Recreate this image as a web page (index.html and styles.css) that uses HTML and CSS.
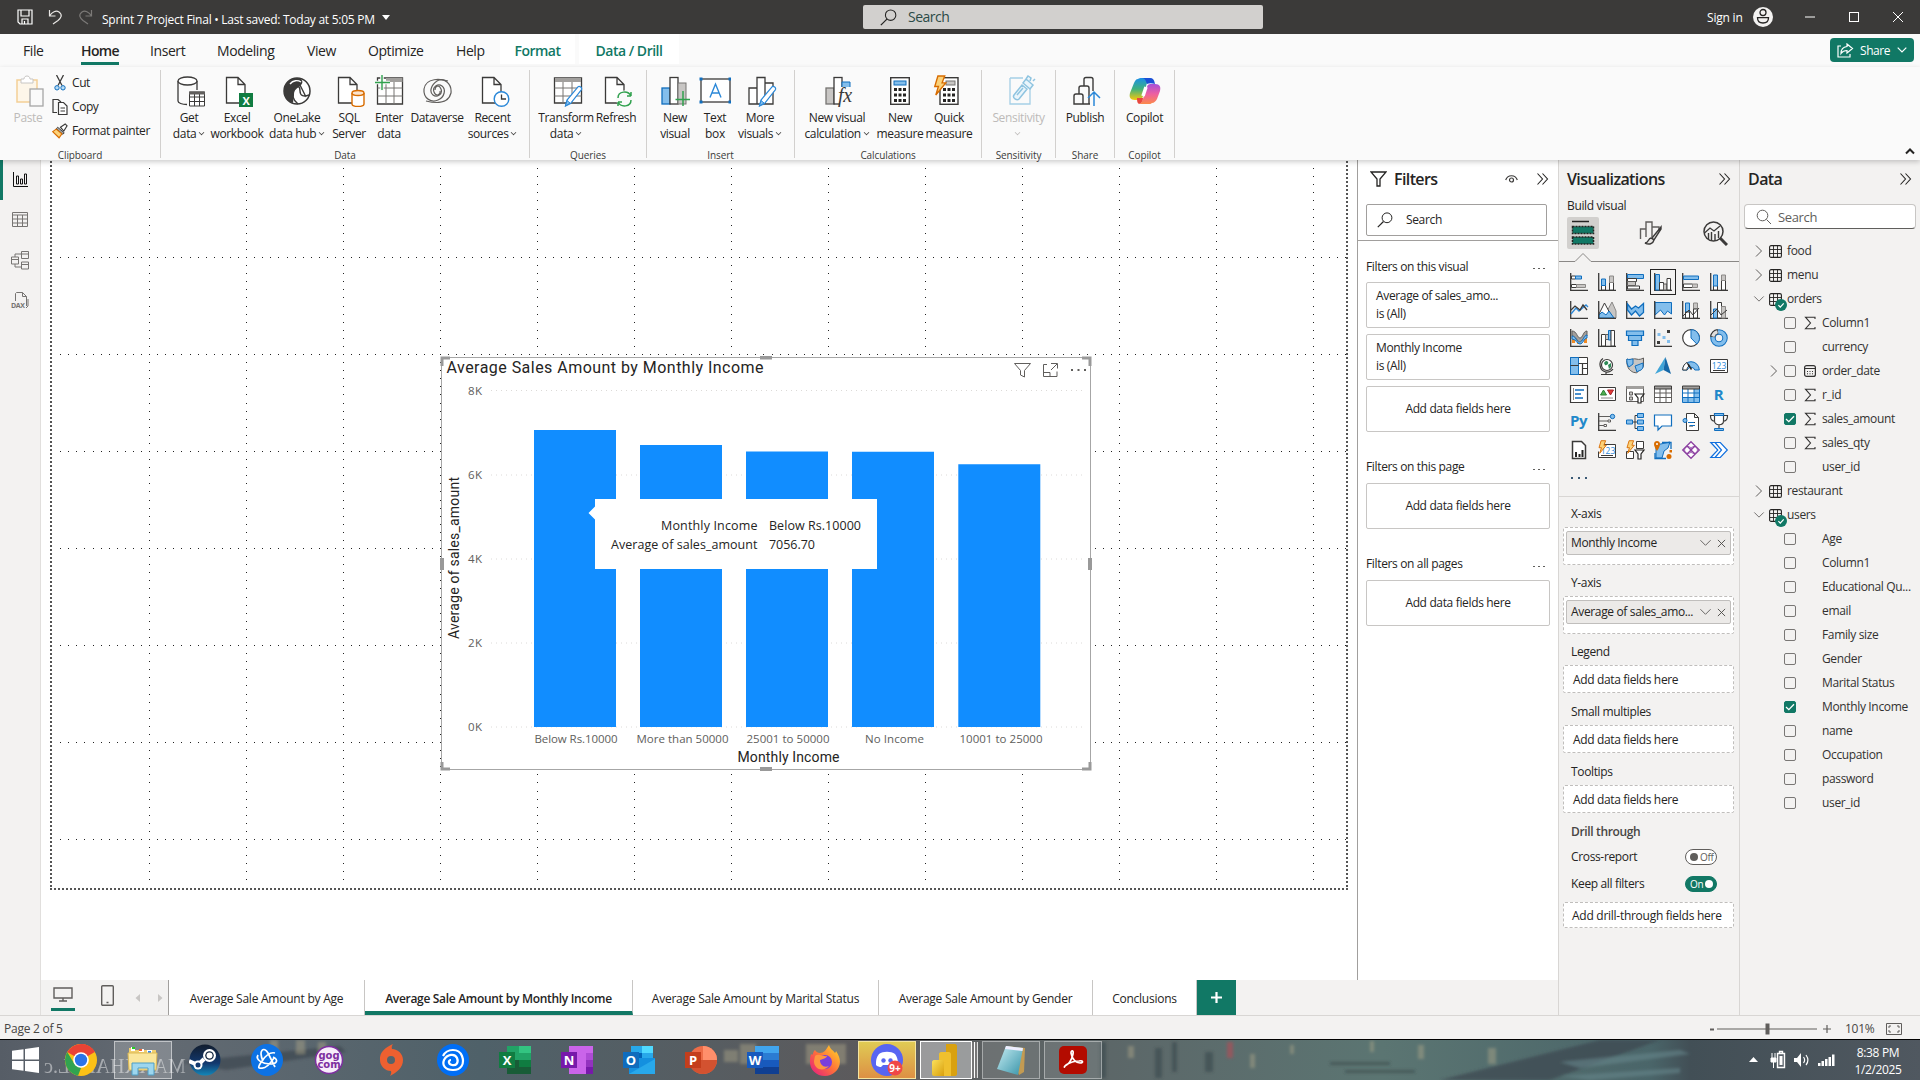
FILE: index.html
```html
<!DOCTYPE html>
<html lang="en">
<head>
<meta charset="utf-8">
<title>Sprint 7 Project Final</title>
<link rel="stylesheet" href="styles.css">
</head>
<body>
<svg class="defs" width="0" height="0" aria-hidden="true">
  <defs>
    <linearGradient id="copA" x1="0" y1="0" x2="0" y2="1"><stop offset="0" stop-color="#1a8fe8"/><stop offset=".5" stop-color="#3fb27c"/><stop offset="1" stop-color="#f7c80c"/></linearGradient>
    <linearGradient id="copB" x1="0" y1="0" x2="0" y2="1"><stop offset="0" stop-color="#a64fd8"/><stop offset=".5" stop-color="#ee5fa0"/><stop offset="1" stop-color="#fc8a4a"/></linearGradient>
    <linearGradient id="steam" x1="0" y1="0" x2="0" y2="1"><stop offset="0" stop-color="#111d2e"/><stop offset=".6" stop-color="#12386e"/><stop offset="1" stop-color="#1387b8"/></linearGradient>
    <linearGradient id="fox" x1="1" y1="0" x2="0" y2="1"><stop offset="0" stop-color="#ffe226"/><stop offset=".5" stop-color="#ff7139"/><stop offset="1" stop-color="#e31587"/></linearGradient>
    <linearGradient id="pbi" x1="0" y1="0" x2="1" y2="1"><stop offset="0" stop-color="#fbe05a"/><stop offset="1" stop-color="#d99f0c"/></linearGradient>
    <linearGradient id="note" x1="0" y1="0" x2="1" y2="1"><stop offset="0" stop-color="#c8eef4"/><stop offset="1" stop-color="#3793a8"/></linearGradient>
    <symbol id="page" viewBox="0 0 28 32"><path d="M1.500 2.500h11.500l7 7v18.500H1.500zM13 2.500v7h7" fill="#fff" stroke="#3b3a39" stroke-width="1.300"/></symbol>
    <symbol id="dchev" viewBox="0 0 12 14"><path d="M1 1.500l5 5.500-5 5.500M6 1.500l5 5.500-5 5.500" fill="none" stroke="#252423" stroke-width="1.100"/></symbol>
    <symbol id="mag" viewBox="0 0 16 16"><circle cx="10" cy="5.800" r="4.900" fill="none" stroke="#252423"/><path d="M6.500 9.500L.8 15.200" stroke="#252423" stroke-width="1.200"/></symbol>
    <symbol id="right" viewBox="0 0 8 14"><path d="M1 1.500L6.500 7 1 12.500" fill="none" stroke="#605e5c"/></symbol>
    <symbol id="open" viewBox="0 0 14 8"><path d="M1.500 1L7 6.500 12.500 1" fill="none" stroke="#605e5c"/></symbol>
    <symbol id="x" viewBox="0 0 10 10"><path d="M1 1l8 8M9 1L1 9" stroke="#4a4846" fill="none"/></symbol>
    <symbol id="tbl" viewBox="0 0 13 13"><rect x=".6" y=".6" width="11.800" height="11.800" rx="1.500" fill="none" stroke="#252423" stroke-width="1.100"/><path d="M.5 4.500h12M.5 8.500h12M4.500.5v12M8.500.5v12" stroke="#252423" stroke-width=".9"/></symbol>
    <symbol id="ok" viewBox="0 0 12 12"><circle cx="6" cy="6" r="6" fill="#117865"/><path d="M3.400 6.200l1.900 1.900 3.400-3.800" fill="none" stroke="#fff" stroke-width="1.200"/></symbol>
    <symbol id="sum" viewBox="0 0 12 14"><path d="M11 3V1.200H1.500L6.500 7l-5 5.700H11V11" fill="none" stroke="#323130" stroke-width="1.100"/></symbol>
    <symbol id="bolt" viewBox="0 0 12 20"><path d="M4 1h6.500L8 7.500h3.500L2 19l2.500-8H1z" fill="#fbd27a" stroke="#d86c00" stroke-width="1.300"/></symbol>
    <symbol id="axes" viewBox="0 0 18 18"><path d="M.7 0v17.300H18" fill="none" stroke="#3b3a39" stroke-width="1.300"/></symbol>
    <symbol id="pencil" viewBox="0 0 18 22"><path d="M1 21l1.500-6L13.500 1.800c1.500-1.300 4.500 1 3.300 3L6 18.500z" fill="#fff" stroke="#2b88d8" stroke-width="1.200"/><path d="M1 21l1.500-5.500 3 2.500z" fill="#83beec" stroke="#2b88d8"/></symbol>
  </defs>
</svg>

<div class="app">
  <header class="titlebar">
    <div class="quick">
      <svg width="16" height="16" viewBox="0 0 16 16"><path d="M1 1h14v14H3l-2-2zM4 1v6h8V1M5 15v-5h6v5M7.500 12v3" fill="none" stroke="#fff" stroke-width="1.200"/></svg>
      <svg width="15" height="16" viewBox="0 0 15 16"><path d="M1.500 1v6h6M1.500 7C4 3 8 1 11 3c4 3 2 6-1 8.500L5 15" fill="none" stroke="#e8e6e4" stroke-width="1.200"/></svg>
      <svg width="15" height="16" viewBox="0 0 15 16"><path d="M13.500 1v6h-6M13.500 7C11 3 7 1 4 3c-4 3-2 6 1 8.500L10 15" fill="none" stroke="#7b7977" stroke-width="1.200"/></svg>
    </div>
    <div class="doc">Sprint 7 Project Final • Last saved: Today at 5:05 PM</div>
    <span class="caret"></span>
    <div class="topsearch"><svg width="17" height="17"><use href="#mag"/></svg><span>Search</span></div>
    <div class="account">
      <span>Sign in</span>
      <svg width="20" height="20" viewBox="0 0 20 20"><circle cx="10" cy="10" r="10" fill="#f3f2f1"/><circle cx="10" cy="5.500" r="3" fill="none" stroke="#252423" stroke-width="1.300"/><path d="M4.500 10.700h11c0 3.500-2 5.300-5.500 5.300s-5.500-1.800-5.500-5.300z" fill="none" stroke="#252423" stroke-width="1.300"/></svg>
      <svg class="win" width="10" height="10"><path d="M0 5h10" stroke="#fff"/></svg>
      <svg class="win" width="10" height="10"><rect x=".5" y=".5" width="9" height="9" fill="none" stroke="#fff"/></svg>
      <svg class="win" width="10" height="10"><path d="M0 0l10 10M10 0L0 10" stroke="#fff"/></svg>
    </div>
  </header>

  <nav class="tabs">
    <span class="tab t-file">File</span><span class="tab t-home active">Home</span><span class="tab t-insert">Insert</span><span class="tab t-model">Modeling</span><span class="tab t-view">View</span><span class="tab t-opt">Optimize</span><span class="tab t-help">Help</span>
    <span class="ctx c-format">Format</span><span class="ctx c-drill">Data / Drill</span>
    <span class="share"><svg width="17" height="15" viewBox="0 0 17 15"><path d="M4 3H1v11h12v-3" fill="none" stroke="#fff" stroke-width="1.200"/><path d="M10 1l5.500 4.500L10 10V7.500c-3 0-4.500.8-6 3C4 6.500 6 4 10 3.500z" fill="none" stroke="#fff" stroke-width="1.200"/></svg><span>Share</span><svg width="10" height="6" viewBox="0 0 10 6"><path d="M.7.700L5 5l4.300-4.300" fill="none" stroke="#fff" stroke-width="1.200"/></svg></span>
  </nav>

  <section class="ribbon">
    <div class="group g-clip">
      <div class="tools">
        <div class="btn off w56 nudge"><svg width="28" height="32" viewBox="0 0 28 32"><path d="M3 5h18v22H1V5z" fill="#fdf6e9" stroke="#f3cf96" stroke-width="1.500"/><path d="M5 8V4h3c0-4 6-4 6 0h3v4z" fill="#fff" stroke="#c8c6c4"/><rect x="14" y="14" width="13" height="17" fill="#fafafa" stroke="#a6a6a6" stroke-width="1.300"/></svg><b>Paste</b></div>
        <div class="clip">
          <span><svg width="12" height="16" viewBox="0 0 12 16"><path d="M2.500 0L8 10.500M9.500 0L4 10.500" stroke="#3b3a39" stroke-width="1.300"/><circle cx="3" cy="12.800" r="2.200" fill="#b7dcf6" stroke="#106ebe"/><circle cx="9" cy="12.800" r="2.200" fill="#b7dcf6" stroke="#106ebe"/></svg>Cut</span>
          <span><svg width="16" height="16" viewBox="0 0 16 16"><path d="M5 13.500H1v-13h5l3 2.500" fill="none" stroke="#3b3a39" stroke-width="1.200"/><path d="M6.500 3.500h5l3.500 3.500v8.500H6.500zM8.500 9h4.500M8.500 12h4.500" fill="#fff" stroke="#3b3a39" stroke-width="1.200"/></svg>Copy</span>
          <span><svg width="17" height="16" viewBox="0 0 17 16"><path d="M9 4l5-3.500L16 2.500 12.500 8z" fill="#fff" stroke="#3b3a39" stroke-width="1.200"/><path d="M6 4l7 6-1.500 1.500-7-6z" fill="#a6a6a6" stroke="#3b3a39"/><path d="M4.500 6l6 5-3 4.200L.7 8.700z" fill="#fbd27a" stroke="#d86c00" stroke-width="1.200"/></svg>Format painter</span>
        </div>
      </div>
      <div class="gname">Clipboard</div>
    </div>
    <div class="group g-data">
      <div class="tools">
        <div class="btn w48 shift nudge"><svg width="30" height="32" viewBox="0 0 30 32"><path d="M2 6v20c0 2 4 3.500 9 3.500M21 6v9" fill="none" stroke="#3b3a39" stroke-width="1.300"/><ellipse cx="11.500" cy="6" rx="9.500" ry="4" fill="#fff" stroke="#3b3a39" stroke-width="1.300"/><path d="M13.500 17h15v14h-15zM13.500 22h15M13.500 26.500h15M18.500 19v12M23.500 19v12" fill="#fff" stroke="#3b3a39"/><path d="M13 16.500h16v3H13z" fill="#605e5c"/></svg><b>Get<br>data <i></i></b></div>
        <div class="btn w48 nudge"><svg width="28" height="32" viewBox="0 0 28 32"><use href="#page" width="28" height="32"/><rect x="14" y="18" width="14" height="14" fill="#107c41"/><text x="21" y="29.500" class="xl">X</text></svg><b>Excel<br>workbook</b></div>
        <div class="btn w72"><svg width="30" height="32" viewBox="0 0 30 32"><circle cx="15" cy="16" r="13" fill="#fff" stroke="#3b3a39" stroke-width="1.500"/><path d="M15 3c6 0 7 5 3 8-3 3-6 3-6 9l-1 8C5 26 2 22 2 16c0-4 2-8 5-10s5-3 8-3z" fill="#3b3a39"/><path d="M12 12c4-3 6 0 6 4 0 5 4 6 9 4M12 14c-2 6-2 10 4 15M18 10l6 12" stroke="#3b3a39" fill="none" stroke-width="1.400"/><path d="M8 9c3-4 8-4 11-2" stroke="#fff" fill="none" stroke-width="1.300"/></svg><b>OneLake<br>data hub <i></i></b></div>
        <div class="btn w32 nudge"><svg width="30" height="32" viewBox="0 0 30 32"><use href="#page" x="1" width="28" height="32"/><path d="M16 18v11c0 3.300 12 3.300 12 0V18" fill="#fff" stroke="#d86c00" stroke-width="1.400"/><ellipse cx="22" cy="18" rx="6" ry="2.500" fill="#fce4cd" stroke="#d86c00" stroke-width="1.400"/></svg><b>SQL<br>Server</b></div>
        <div class="btn w48"><svg width="30" height="32" viewBox="0 0 30 32"><path d="M3.500 3h25v26h-25z" fill="#fff" stroke="#3b3a39" stroke-width="1.300"/><path d="M12 3h16.500v4H12z" fill="#a19f9d"/><path d="M3.500 13h25M3.500 21h25M12 7v22M20 7v22" stroke="#767472"/><path d="M8 0v16M0 7.500h16" stroke="#fafafa" stroke-width="3.500"/><path d="M8 0v15M1 7.500h15" stroke="#30a14e" stroke-width="1.400"/></svg><b>Enter<br>data</b></div>
        <div class="btn w48"><svg width="30" height="32" viewBox="0 0 30 32"><g fill="none" stroke="#605e5c" stroke-width="1.200"><path d="M26 6C19 4 4 2 2 14c-1 10 8 14 14 11 7-3 8-11 4-14s-10 1-8 6 7 3 6-1"/><path d="M4 26c8 2 22 4 25-8C30 8 21 2 15 6S7 17 11 20s10-1 8-6-6-3-6 1"/></g></svg><b>Dataverse</b></div>
        <div class="btn w63 nudge"><svg width="30" height="32" viewBox="0 0 30 32"><use href="#page" x="1" width="28" height="32"/><circle cx="21.500" cy="24" r="7.300" fill="#fff" stroke="#2b88d8" stroke-width="1.400"/><path d="M21.500 19.500V24H26" fill="none" stroke="#3b3a39" stroke-width="1.300"/></svg><b>Recent<br>sources <i></i></b></div>
      </div>
      <div class="gname">Data</div>
    </div>
    <div class="group g-query">
      <div class="tools">
        <div class="btn w58 qfirst nudge"><svg width="32" height="32" viewBox="0 0 32 32"><path d="M2.500 3h27v25h-27z" fill="#fff" stroke="#3b3a39" stroke-width="1.300"/><path d="M3 3h26v4H3z" fill="#a19f9d"/><path d="M2.500 13h27M2.500 21h27M11 7v21M20 7v21" stroke="#767472"/><use href="#pencil" x="12" y="10" width="19" height="22"/></svg><b>Transform<br>data <i></i></b></div>
        <div class="btn w42 nudge"><svg width="30" height="32" viewBox="0 0 30 32"><use href="#page" x="1" width="28" height="32"/><circle cx="21.500" cy="24" r="8.500" fill="#fafafa"/><path d="M15 23c0-7 10-8 13-2v-4m0 4h-4M28 25c0 7-10 8-13 2v4m0-4h4" fill="none" stroke="#30a14e" stroke-width="1.500"/></svg><b>Refresh</b></div>
      </div>
      <div class="gname">Queries</div>
    </div>
    <div class="group g-ins">
      <div class="tools">
        <div class="btn w40 ifirst"><svg width="30" height="32" viewBox="0 0 30 32"><rect x="2" y="13" width="8" height="16" fill="#83beec" stroke="#106ebe" stroke-width="1.300"/><rect x="10" y="2.500" width="8" height="26.500" fill="#fff" stroke="#3b3a39" stroke-width="1.300"/><rect x="18" y="8" width="8" height="21" fill="#c8c6c4" stroke="#767472"/><path d="M23 16v15M15.500 24.500h15" stroke="#30a14e" stroke-width="1.500"/></svg><b>New<br>visual</b></div>
        <div class="btn w40"><svg width="32" height="32" viewBox="0 0 32 32"><rect x="2" y="4" width="29" height="23" fill="#fff" stroke="#3b3a39" stroke-width="1.300"/><path d="M.5 2.500h3v3h-3zM29.500 2.500h3v3h-3zM.5 25.500h3v3h-3zM29.500 25.500h3v3h-3z" fill="#106ebe"/><path d="M11 22.500L16.500 9 22 22.500M13 18h7" fill="none" stroke="#2b88d8" stroke-width="1.400"/></svg><b>Text<br>box</b></div>
        <div class="btn w50 nudge"><svg width="30" height="32" viewBox="0 0 30 32"><path d="M2 13h8v16H2zM10 2.500h8V29h-8zM18 8h8v21h-8z" fill="#fff" stroke="#3b3a39" stroke-width="1.300"/><use href="#pencil" x="11" y="10" width="19" height="22"/></svg><b>More<br>visuals <i></i></b></div>
      </div>
      <div class="gname">Insert</div>
    </div>
    <div class="group g-calc">
      <div class="tools">
        <div class="btn w76 nudge"><svg width="30" height="32" viewBox="0 0 30 32"><rect x="2" y="13" width="8" height="16" fill="#c8c6c4" stroke="#767472" stroke-width="1.300"/><rect x="10" y="2.500" width="8" height="26.500" fill="#fff" stroke="#3b3a39" stroke-width="1.300"/><path d="M18 7h8v6h-8z" fill="#83beec" stroke="#106ebe"/><path d="M16 12h14v20H16z" fill="#fafafa"/><text x="14" y="27" class="fx">fx</text></svg><b>New visual<br>calculation <i></i></b></div>
        <div class="btn w50"><svg width="20" height="32" viewBox="0 0 20 32"><rect x=".7" y="2.700" width="18.600" height="26.600" fill="#fff" stroke="#3b3a39" stroke-width="1.400"/><rect x="4" y="6" width="12" height="4" fill="#83beec" stroke="#106ebe"/><path d="M4 14.500h12M4 20h12M4 25.500h12" stroke="#252423" stroke-width="3" stroke-dasharray="3 1.500"/></svg><b>New<br>measure</b></div>
        <div class="btn w48 back"><svg width="30" height="32" viewBox="0 0 30 32"><rect x="8" y="2.700" width="18" height="26.600" fill="#fff" stroke="#3b3a39" stroke-width="1.400"/><rect x="14" y="6" width="9" height="4" fill="#c8c6c4" stroke="#767472"/><path d="M11 14.500h12M11 20h12M11 25.500h12" stroke="#252423" stroke-width="3" stroke-dasharray="3 1.500"/><use href="#bolt" x="1" y="0" width="14" height="21"/></svg><b>Quick<br>measure</b></div>
      </div>
      <div class="gname">Calculations</div>
    </div>
    <div class="group g-sens"><div class="tools"><div class="btn off w73 nudge"><svg width="30" height="32" viewBox="0 0 30 32"><path d="M4 3h13M24 14v15H4V3" fill="none" stroke="#a5cfe6" stroke-width="1.300"/><path d="M8 20l8-10 5 4-8 10c-2 2-7-1-5-4zM11 20l6-7M17 8l3-4 7 6-3 4zM20 4l2-3 3 2-1 3M27 6l2-2" fill="#eaf5fb" stroke="#8fc4e0" stroke-width="1.500"/></svg><b>Sensitivity<br><i></i></b></div></div><div class="gname">Sensitivity</div></div>
    <div class="group g-share"><div class="tools"><div class="btn w58 nudge"><svg width="30" height="32" viewBox="0 0 30 32"><path d="M12 11V4.500c0-1.500 1-2 2-2h5c1 0 2 .5 2 2V16M7 19v-6c0-1.500 1-2 2-2h6c1 0 2 .5 2 2v16M2 21c0-1 .5-2 2-2h5c1.500 0 2 .5 2 2v8H2zM11 29h7" fill="none" stroke="#3b3a39" stroke-width="1.400"/><path d="M22 31V17M16 23l6-6 6 6" fill="none" stroke="#2b88d8" stroke-width="1.500"/></svg><b>Publish</b></div></div><div class="gname">Share</div></div>
    <div class="group g-cop"><div class="tools"><div class="btn w58"><svg width="32" height="32" viewBox="0 0 32 32"><path d="M9 4c1-1 2-1 4-1h9c-2 1-3 2-4 5l-4 13c-1 3-2 4-5 4H6c-5 0-6-3-5-7L5 8c1-2 2-4 4-4z" fill="url(#copA)"/><path d="M13 3h8c3 0 4 2 4.500 4L26 9c-3-1-6-1-8 0-1-3-2-6-5-6z" fill="#1b4fd6"/><path d="M23 28c-1 1-2 1-4 1h-9c2-1 3-2 4-5l4-12c1-3 2-3 5-3h3c5 0 6 3 5 7l-3 8c-1 2-3 4-5 4z" fill="url(#copB)"/><path d="M8 23h6c0 2-1 5-4 6-2-1-2-4-2-6z" fill="#e8473f"/><path d="M17 12l-3 9" stroke="#fff" stroke-width="3.500"/></svg><b>Copilot</b></div></div><div class="gname">Copilot</div></div>
    <svg class="collapse" width="10" height="7" viewBox="0 0 10 7"><path d="M1 5.500l4-4 4 4" fill="none" stroke="#252423" stroke-width="2"/></svg>
  </section>

  <main class="body">
    <aside class="rail">
      <span class="on"><svg width="16" height="16" viewBox="0 0 16 16"><path d="M1.500 0v14.500H16M4.500 4h2v8h-2zM8.500 7h2v5h-2zM12.500 2h2v10h-2z" fill="none" stroke="#111"/></svg></span>
      <span><svg width="16" height="16" viewBox="0 0 16 16"><path d="M.5.500h15v14H.500zM.5 3h15M.5 7h15M.5 11h15M5.500 3v11.500M10.500 3v11.500" fill="none" stroke="#767472"/></svg></span>
      <span><svg width="18" height="19" viewBox="0 0 18 19"><path d="M.5 6h7v7h-7zM.5 8.500h7M10.500.5h7v7h-7zM10.500 3h7M10.500 11h7v7h-7zM10.500 13.500h7M4 6V3h6.500M4 13v3h6.500" fill="none" stroke="#767472"/></svg></span>
      <span><svg width="18" height="17" viewBox="0 0 18 17"><path d="M4.500 9V1.500l1-1h6l4 4V14M11.500.5v4h4M17 7v7l-2 2" fill="none" stroke="#767472"/><text x="0" y="16" class="dax">DAX</text></svg></span>
    </aside>

    <div class="stage">
      <div class="canvas">
        <svg class="grid" width="1316" height="820">
          <defs><pattern id="g" width="97" height="97" patternUnits="userSpaceOnUse" x="11" y="0"><path d="M0 8h1v1h-1zM0 16h1v1h-1zM0 24h1v1h-1zM0 32h1v1h-1zM0 40h1v1h-1zM0 49h1v1h-1zM0 57h1v1h-1zM0 65h1v1h-1zM0 73h1v1h-1zM0 81h1v1h-1zM0 89h1v1h-1zM0 0h1v1h-1zM8 0h1v1h-1zM16 0h1v1h-1zM24 0h1v1h-1zM32 0h1v1h-1zM41 0h1v1h-1zM49 0h1v1h-1zM57 0h1v1h-1zM65 0h1v1h-1zM73 0h1v1h-1zM81 0h1v1h-1zM89 0h1v1h-1z" fill="#222"/></pattern></defs>
          <rect x="12" y="2" width="1294" height="725" fill="url(#g)"/>
          <path d="M10 1V730M1306 1V730M9 729H1307" fill="none" stroke="#555" stroke-width="2" stroke-dasharray="2 2"/>
        </svg>
        <svg class="chart" width="656" height="416" viewBox="440 356 656 416">
          <rect x="441.500" y="357.500" width="649" height="412" fill="#fff" stroke="#a6a6a6"/>
          <path d="M442 366v-8h8M1082 358h8v8M442 762v7h8M1082 769h8v-7" fill="none" stroke="#999" stroke-width="3"/>
          <path d="M760 357.500h12M760 769h12M442 558v12M1090 558v12" stroke="#999" stroke-width="4"/>
          <text x="446.500" y="373" class="ctitle" textLength="317">Average Sales Amount by Monthly Income</text>
          <g class="hdr"><path d="M1014.500 363.500h16l-6 7v6.500l-4-2v-4.500z"/><path d="M1047 364.500h-3.500v12H1057v-5M1051 363.500h6.500v5M1057 364l-6 6M1044 372.500h6v4"/></g>
          <path d="M1071 369h2v2h-2zM1077.500 369h2v2h-2zM1084 369h2v2h-2z" fill="#605e5c"/>
          <path d="M491 390.500h593M491 475h593M491 559h593M491 643h593M491 727h593" stroke="#dcdad8" stroke-dasharray="1 4"/>
          <g class="ax"><text x="468" y="394.500" textLength="14">8K</text><text x="468" y="479" textLength="14">6K</text><text x="468" y="563" textLength="14">4K</text><text x="468" y="647" textLength="14">2K</text><text x="468" y="731" textLength="14">0K</text>
          <text x="534.500" y="743" textLength="83">Below Rs.10000</text><text x="636.500" y="743" textLength="92">More than 50000</text><text x="746.500" y="743" textLength="83">25001 to 50000</text><text x="865" y="743" textLength="59">No Income</text><text x="959.500" y="743" textLength="83">10001 to 25000</text></g>
          <g fill="#118dff"><path d="M534 430h82v297h-82zM640 445h82v282h-82zM746 451.500h82V727h-82zM852 451.700h82V727h-82zM958.300 464.300h82V727h-82z"/></g>
          <text x="737.500" y="762" class="atitle" textLength="102">Monthly Income</text>
          <text transform="translate(459 639) rotate(-90)" class="atitle" textLength="162">Average of sales_amount</text>
          <path d="M595 499h282v70H595V519.500L588.500 513l6.500-6.500z" fill="#fff"/>
          <g class="tip"><text x="661" y="530" textLength="96.500">Monthly Income</text><text x="769" y="530" textLength="92">Below Rs.10000</text><text x="611" y="549" textLength="146.500">Average of sales_amount</text><text x="769" y="549" textLength="46">7056.70</text></g>
        </svg>
      </div>
      <div class="pages">
        <div class="views">
          <span class="desk"><svg width="20" height="15" viewBox="0 0 20 15"><path d="M1 1h18v10H1zM10 11v3M6 14h8" fill="none" stroke="#605e5c" stroke-width="1.400"/></svg></span>
          <svg class="phone" width="13" height="21" viewBox="0 0 13 21"><rect x=".7" y=".7" width="11.600" height="19.600" rx="1" fill="none" stroke="#605e5c" stroke-width="1.400"/><path d="M5.500 17.500h2" stroke="#605e5c" stroke-width="1.500"/></svg>
          <svg class="nav" width="28" height="8"><path d="M5 0v8L.5 4zM23 0v8l4.500-4z" fill="#c8c6c4"/></svg>
        </div>
        <span class="pg p1">Average Sale Amount by Age</span><span class="pg p2 sel">Average Sale Amount by Monthly Income</span><span class="pg p3">Average Sale Amount by Marital Status</span><span class="pg p4">Average Sale Amount by Gender</span><span class="pg p5">Conclusions</span><span class="plus"><svg width="11" height="11"><path d="M5.500 0v11M0 5.500h11" stroke="#fff" stroke-width="2.200"/></svg></span>
      </div>
    </div>

    <aside class="filters">
      <div class="fhead"><svg width="17" height="16" viewBox="0 0 17 16"><path d="M1 1h15l-6 7v7H7V8z" fill="none" stroke="#252423" stroke-width="1.300"/></svg><h2>Filters</h2><svg class="eye" width="13" height="10" viewBox="0 0 13 10"><path d="M.7 6C2.500.3 10.500.3 12.300 6" fill="none" stroke="#3b3a39" stroke-width="1.200"/><circle cx="6.500" cy="6" r="2" fill="none" stroke="#3b3a39" stroke-width="1.200"/></svg><svg width="13" height="14"><use href="#dchev"/></svg></div>
      <div class="fsearch"><svg width="16" height="16"><use href="#mag"/></svg><span>Search</span></div>
      <div class="flist">
        <div class="flabel">Filters on this visual<span class="el"><i></i><i></i><i></i></span></div>
        <div class="card">Average of sales_amo...<br>is (All)</div>
        <div class="card">Monthly Income<br>is (All)</div>
        <div class="card add">Add data fields here</div>
        <div class="flabel more">Filters on this page<span class="el"><i></i><i></i><i></i></span></div>
        <div class="card add">Add data fields here</div>
        <div class="flabel more">Filters on all pages<span class="el"><i></i><i></i><i></i></span></div>
        <div class="card add">Add data fields here</div>
      </div>
    </aside>

    <aside class="viz">
      <div class="phead"><h2>Visualizations</h2><svg width="13" height="14"><use href="#dchev"/></svg></div>
      <div class="build">Build visual</div>
      <div class="modes">
        <span class="mode cur"><svg width="24" height="26" viewBox="0 0 24 26"><path d="M1 1.500h17" stroke="#252423" stroke-width="1.500"/><path d="M1.500 6.500h21v7h-21zM1.500 17h21v7h-21z" fill="#117865" stroke="#252423" stroke-width="1.500" stroke-dasharray="2 1"/></svg></span>
        <span class="mode"><svg width="24" height="24" viewBox="0 0 24 24"><path d="M1.500 18V8H7v8M7 8V1h6v15M13 6h7v3" fill="none" stroke="#605e5c" stroke-width="1.400"/><path d="M22 6l-9 11 2 2L22 8zM12 17c-3 0-2 5-6 5 4 2 8 1 9-3z" fill="#e8e6e4" stroke="#3b3a39" stroke-width="1.400"/></svg></span>
        <span class="mode"><svg width="25" height="25" viewBox="0 0 25 25"><circle cx="10.500" cy="10.500" r="9.500" fill="none" stroke="#3b3a39" stroke-width="1.500"/><path d="M17 17l7 7" stroke="#3b3a39" stroke-width="3"/><path d="M1.500 12L7 7l4 3 6-5" fill="none" stroke="#3b3a39" stroke-width="1.300"/><path d="M5.500 12v6M8.500 11v8M12 13v7M15.500 10v7" stroke="#3b3a39" stroke-width="1.400"/></svg></span>
      </div>
      <svg class="notch" width="180" height="10"><path d="M0 8.500h16l8-8 8 8h148" fill="none" stroke="#8a8886"/></svg>
      <div class="gallery">
        <svg><use href="#axes"/><path d="M1.500 3h4v3h-4zM1.500 11.500h5v3h-5z" fill="#fff" stroke="#3b3a39"/><path d="M5.500 3h6v3h-6z" fill="#83beec" stroke="#106ebe"/><path d="M6.500 11.500h9v3h-9z" fill="#c8c6c4" stroke="#8a8886"/></svg>
        <svg><use href="#axes"/><path d="M3.500 12.500h4V17h-4zM11.500 9.500h4V17h-4z" fill="#fff" stroke="#3b3a39"/><path d="M3.500 6h4v6.500h-4z" fill="#83beec" stroke="#106ebe"/><path d="M11.500 3h4v6.500h-4z" fill="#c8c6c4" stroke="#8a8886"/></svg>
        <svg><use href="#axes"/><path d="M1.500 1.500h16v4h-16z" fill="#83beec" stroke="#106ebe"/><path d="M1.500 5.500h9v3h-9zM1.500 13h12v3h-12z" fill="#fff" stroke="#3b3a39"/><path d="M1.500 8.500h8v4h-8z" fill="#c8c6c4" stroke="#605e5c"/></svg>
        <svg class="pick"><use href="#axes"/><path d="M1.500 1.500h4V17h-4z" fill="#83beec" stroke="#106ebe"/><path d="M5.500 9.500h4V17h-4z" fill="#fff" stroke="#3b3a39"/><path d="M9.500 11h3.500v6H9.500z" fill="#c8c6c4" stroke="#605e5c"/><path d="M13 5.500h3.500V17H13z" fill="#fff" stroke="#3b3a39"/></svg>
        <svg><use href="#axes"/><path d="M1.500 3h15v3.500h-15z" fill="#83beec" stroke="#106ebe"/><path d="M1.500 11h9v3.500h-9z" fill="#fff" stroke="#3b3a39"/><path d="M10.500 11h5v3.500h-5z" fill="#c8c6c4" stroke="#8a8886"/></svg>
        <svg><use href="#axes"/><path d="M3.500 12.500h4V17h-4zM11.500 7.500h4V17h-4z" fill="#fff" stroke="#3b3a39"/><path d="M3.500 2h4v11h-4z" fill="#83beec" stroke="#106ebe"/><path d="M11.500 2h4v5.500h-4z" fill="#c8c6c4" stroke="#8a8886"/></svg>

        <svg><use href="#axes"/><path d="M1 13l5-6 3 3 7-6 2 2" fill="none" stroke="#2b88d8" stroke-width="1.300"/><path d="M1 9l4-4 5 4 3-5 4 5" fill="none" stroke="#3b3a39" stroke-width="1.300"/></svg>
        <svg><path d="M8 12l6-11 4 9v7H9z" fill="#c8c6c4" stroke="#8a8886"/><path d="M1 13l5.500-11 8 15H1z" fill="#fff" stroke="#3b3a39"/><path d="M1 17V14l3-3 4 3 3-4 5 7z" fill="#83beec" stroke="#106ebe"/><use href="#axes"/></svg>
        <svg><use href="#axes"/><path d="M1.500 3l4 5 4-3 3 2 5-4.500v9l-4 3.500-4-5-4 4-4-5z" fill="#83beec" stroke="#106ebe" stroke-width="1.300"/></svg>
        <svg><path d="M1 1.500h16.500V13l-4-3-3 4-4-5L1 14z" fill="#83beec" stroke="#106ebe"/><use href="#axes"/></svg>
        <svg><use href="#axes"/><path d="M3.500 2h4v9h-4z" fill="#83beec" stroke="#106ebe"/><path d="M11.500 2h4v6h-4z" fill="#c8c6c4" stroke="#8a8886"/><path d="M3.500 11h4v6h-4zM11.500 8h4v9h-4z" fill="#fff" stroke="#3b3a39"/><path d="M1 15l6-6 4 5 6-7" fill="none" stroke="#3b3a39"/></svg>
        <svg><use href="#axes"/><path d="M3.500 8h4v9h-4z" fill="#83beec" stroke="#106ebe"/><path d="M7.500 1.500h4V17h-4z" fill="#fff" stroke="#3b3a39"/><path d="M11.500 5.500h4V17h-4z" fill="#c8c6c4" stroke="#8a8886"/><path d="M1 14l6-6 4 6 6-5" fill="none" stroke="#3b3a39"/></svg>

        <svg><use href="#axes"/><path d="M2 2c5 0 5 7 8 7s3-7 7-7v5c-4 0-4 6-7 6S6 7 2 7z" fill="#a19f9d" stroke="#605e5c"/><path d="M2 9h3v5H2zM14 9h3v5h-3zM7 12h5v3H7z" fill="#f08a24"/><path d="M2 7c4 0 4 6 7.500 6S14 6 17 6v3c-3 0-4 6-7 6s-4-5-8-5z" fill="#83beec" stroke="#106ebe"/></svg>
        <svg><use href="#axes"/><path d="M3.500 5.500h4V17h-4z" fill="#fff" stroke="#3b3a39"/><path d="M7.500 5.500h3v5h-3z" fill="#c8c6c4" stroke="#605e5c"/><path d="M10.500 1.500h2.500V11h-2.500z" fill="#83beec" stroke="#106ebe"/><path d="M13 1.500h3.500V17H13z" fill="#fff" stroke="#3b3a39"/></svg>
        <svg><path d="M.5 2h17v4.500H.500zM2.500 6.500h13v5h-13zM6 11.500h6v5H6z" fill="#83beec" stroke="#106ebe" stroke-width="1.200"/></svg>
        <svg><use href="#axes"/><path d="M13 1h3v3h-3zM3 12h3v3H3z" fill="#3b3a39"/><path d="M3.500 4h3v3h-3zM8.500 7h3v3h-3zM13 11h3v3h-3z" fill="#83beec"/></svg>
        <svg><circle cx="9" cy="9" r="8.300" fill="#fff" stroke="#3b3a39" stroke-width="1.200"/><path d="M9 .7A8.300 8.300 0 0 1 14.800 15L9 9z" fill="#83beec" stroke="#106ebe"/></svg>
        <svg><circle cx="9" cy="9" r="6" fill="none" stroke="#106ebe" stroke-width="5.500"/><circle cx="9" cy="9" r="6" fill="none" stroke="#83beec" stroke-width="3.500"/><path d="M2.500 8A6.500 6.500 0 0 1 8 2.500" fill="none" stroke="#3b3a39" stroke-width="5"/><path d="M2.800 7.500A6.500 6.500 0 0 1 7.500 2.800" fill="none" stroke="#e1dfdd" stroke-width="3.200"/></svg>

        <svg><path d="M.5.500h17v17H.500z" fill="#fff" stroke="#3b3a39"/><path d="M.5.500h8v17h-8z" fill="#83beec" stroke="#106ebe"/><path d="M.5 8.500h8M8.500 6.500h9M12.500 6.500v11M12.500 11.500h5" stroke="#3b3a39" stroke-width="1.200"/></svg>
        <svg><circle cx="9" cy="8" r="5.500" fill="#fff" stroke="#3b3a39" stroke-width="1.200"/><path d="M6 6c2-3 3-2 4-1s-1 4-3 3zM10 8l3-2v4l-2 2z" fill="#2e8b57"/><path d="M5 1.500C0 5 1.500 14 8 15c3 .5 5-.5 7-3M8 15v2M3 17.500h12" fill="none" stroke="#3b3a39" stroke-width="1.200"/></svg>
        <svg><path d="M1 2c3 2 5-1 9 0s5 0 7.500-1v8c-2 5-5 4-7 7-2-1-4 0-5-2C2 13 0 6 1 2z" fill="#c8c6c4" stroke="#605e5c"/><path d="M1 2c2 1 4 0 6 0v5l-4 3C1 8 .5 4 1 2zM9 9l8-3v4c-1 4-4 3-6 5z" fill="#83beec" stroke="#106ebe"/></svg>
        <svg><path d="M11.500 0L1 17l8.500-4z" fill="#41a5d8"/><path d="M11.500 0L17 17l-7.500-4z" fill="#1668a8"/></svg>
        <svg><path d="M.7 13a8.300 8.300 0 0 1 16.600 0h-4.500a4 4 0 0 0-7.600 0z" fill="#83beec" stroke="#106ebe"/><path d="M.7 13C.7 9 3 6.500 5 5.500L7 9c-1.500 1-2 2-2 4z" fill="#fff" stroke="#3b3a39"/><path d="M9.500 12.500L6 7" stroke="#252423" stroke-width="1.500"/></svg>
        <svg><path d="M.5 2.500h17v13H.500zM3 13.500h12" fill="#fff" stroke="#3b3a39"/><text x="9" y="11.500" class="n123">123</text></svg>

        <svg><path d="M.5.500h17v17H.500z" fill="#fff" stroke="#3b3a39" stroke-width="1.200"/><path d="M3.500 3v12" stroke="#8a8886"/><path d="M5 5h9M5 9h6M5 13h8" stroke="#106ebe" stroke-width="1.700"/></svg>
        <svg><path d="M.5 2.500h17v13H.500z" fill="#fff" stroke="#3b3a39"/><path d="M2.500 10L5.500 5l3 5z" fill="#4caf50" stroke="#2e7d32"/><path d="M9.500 5h6l-3 5z" fill="#e53935" stroke="#a4262c"/><path d="M3 13h12" stroke="#8a8886"/></svg>
        <svg><path d="M.5 1.500h17v15H.500z" fill="#fff" stroke="#605e5c"/><path d="M.5 1h17v3H.500z" fill="#a19f9d"/><path d="M3.500 7h3v3h-3zM3.500 12h3v3h-3z" fill="#c8c6c4" stroke="#605e5c"/><path d="M9 9h9l-3 4v5h-3v-5z" fill="#fff" stroke="#252423" stroke-width="1.200"/></svg>
        <svg><path d="M.5 1.500h17v16H.500zM.5 8h17M.5 12.500h17M6 4v13M12 4v13" fill="#fff" stroke="#605e5c"/><path d="M.5 1h17v3H.500z" fill="#a19f9d" stroke="#3b3a39"/></svg>
        <svg><path d="M.5 1.500h17v16H.500z" fill="#fff"/><path d="M12 4h5.500v13.500H.5v-5H12z" fill="#83beec"/><path d="M.5 1.500h17v16H.500zM.5 8h17M.5 12.500h17M6 4v13M12 4v13" fill="none" stroke="#106ebe"/><path d="M.5 1h17v3H.500z" fill="#a19f9d" stroke="#3b3a39"/></svg>
        <svg><text x="8.500" y="14.500" class="lang">R</text></svg>

        <svg><text x="8.500" y="12.500" class="lang">Py</text></svg>
        <svg><use href="#axes"/><path d="M1 3.500h12M1 8h9M1 12.500h6" stroke="#605e5c" stroke-width="1.200"/><circle cx="14.500" cy="3.500" r="2.200" fill="#83beec" stroke="#106ebe"/><path d="M10 7h2.500v2H10zM6 11.500h2.500v2H6z" fill="#fff" stroke="#605e5c"/></svg>
        <svg><path d="M6 9h3M9 2.500v13M9 2.500h3M9 9h3M9 15.500h3" stroke="#3b3a39" fill="none"/><path d="M.5 7h6v4h-6zM11.500.500h6v4h-6zM11.500 7h6v4h-6zM11.500 13.500h6v4h-6z" fill="#83beec" stroke="#106ebe"/></svg>
        <svg><path d="M.5 2h17v11H8l-4 4v-4H.500z" fill="#fff" stroke="#106ebe" stroke-width="1.200"/></svg>
        <svg><path d="M4.500.500h8l4 4v13h-12zM12.500.500v4h4M7 9.500h6M7 13h4" fill="#fff" stroke="#3b3a39"/><circle cx="3" cy="7.500" r="2" fill="#83beec" stroke="#106ebe"/><path d="M6 9.500h6M8 12.500h5" stroke="#106ebe"/></svg>
        <svg><path d="M4.500.500h9V8c0 5-9 5-9 0zM4.500 2.500h-4c0 4 1 5 4.500 6M13.500 2.500h4c0 4-1 5-4.500 6M9 12v4" fill="#fff" stroke="#3b3a39" stroke-width="1.200"/><path d="M4.500.500h9v2h-9zM4.500 15.500h9v2h-9z" fill="#83beec" stroke="#106ebe"/></svg>

        <svg><path d="M2.500.500h9l4 4v13h-13z" fill="#fff" stroke="#3b3a39" stroke-width="1.500"/><path d="M5 11h2v5H5zM8.500 13h2v3h-2zM11.500 9h2v7h-2z" fill="#252423"/></svg>
        <svg><path d="M5.500 3.500h12v13H.5v-6M3 14.500h12" fill="#fff" stroke="#3b3a39"/><text x="10" y="12.500" class="n123">123</text><use href="#bolt" x="-1" y="-1" width="11" height="14"/></svg>
        <svg><path d="M10.500.500h7v7h-7zM.5 10.500h7v7h-7z" fill="#fff" stroke="#3b3a39"/><path d="M9 9h9l-3 4v5h-3v-5z" fill="#fff" stroke="#252423" stroke-width="1.200"/><use href="#bolt" x="-1" y="-1" width="11" height="14"/></svg>
        <svg><path d="M2 4l14-3-2 6-4 3-2 7H2z" fill="#83beec" stroke="#106ebe"/><path d="M8 1.500h9V8M1 12v5.500h11" fill="none" stroke="#106ebe" stroke-width="1.300"/><path d="M0 3c0-4 6-4 6 0 0 3-3 7-3 7S0 6 0 3z" fill="#d86c00"/><circle cx="3" cy="3" r="1" fill="#fff"/><circle cx="15" cy="15.500" r="2.500" fill="#d86c00"/><path d="M15.500 9h2.500v2.500h-2.500z" fill="#d86c00"/></svg>
        <svg><path d="M9 .7L17.300 9 9 17.300.7 9zM4.800 4.800l8.400 8.400M13.200 4.800l-8.400 8.400" fill="#fff" stroke="#8b3fa0" stroke-width="1.300"/><circle cx="6" cy="9" r="3.500" fill="none" stroke="#8b3fa0" stroke-width=".8"/><circle cx="12" cy="9" r="3.500" fill="none" stroke="#8b3fa0" stroke-width=".8"/></svg>
        <svg><path d="M.8 1.500h9.500l7 7.500-7 7.500H.8l7-7.500zM5 1.500l6.500 7.500L5 16.500" fill="#fff" stroke="#0f6fde" stroke-width="1.200"/></svg>
      </div>
      <div class="dots3"><i></i><i></i><i></i></div>
      <div class="wells">
        <label>X-axis</label>
        <div class="well tall"><div class="pill"><span>Monthly Income</span><svg width="13" height="8"><use href="#open"/></svg><svg width="9" height="9"><use href="#x"/></svg></div></div>
        <label>Y-axis</label>
        <div class="well tall"><div class="pill"><span>Average of sales_amo...</span><svg width="13" height="8"><use href="#open"/></svg><svg width="9" height="9"><use href="#x"/></svg></div></div>
        <label>Legend</label><div class="well">Add data fields here</div>
        <label class="near">Small multiples</label><div class="well">Add data fields here</div>
        <label class="near">Tooltips</label><div class="well">Add data fields here</div>
        <div class="drill">Drill through</div>
        <div class="sw"><span>Cross-report</span><span class="toggle"><i></i>Off</span></div>
        <div class="sw"><span>Keep all filters</span><span class="toggle yes">On<i></i></span></div>
        <div class="well last">Add drill-through fields here</div>
      </div>
    </aside>

    <aside class="data">
      <div class="phead"><h2>Data</h2><svg width="13" height="14"><use href="#dchev"/></svg></div>
      <div class="dsearch"><svg width="16" height="16" viewBox="0 0 16 16"><circle cx="6.500" cy="6.500" r="5.300" fill="none" stroke="#605e5c"/><path d="M10.500 10.500l4.500 4.500" stroke="#605e5c"/></svg><span>Search</span></div>
      <div class="tree">
        <div class="tr"><svg class="cv" width="8" height="14"><use href="#right"/></svg><span class="tb"><svg width="13" height="13"><use href="#tbl"/></svg></span><span>food</span></div>
        <div class="tr"><svg class="cv" width="8" height="14"><use href="#right"/></svg><span class="tb"><svg width="13" height="13"><use href="#tbl"/></svg></span><span>menu</span></div>
        <div class="tr"><svg class="cv o" width="12" height="8"><use href="#open"/></svg><span class="tb"><svg width="13" height="13"><use href="#tbl"/></svg><svg class="badge" width="12" height="12"><use href="#ok"/></svg></span><span>orders</span></div>
        <div class="fd"><i class="cb"></i><svg width="12" height="14"><use href="#sum"/></svg><span>Column1</span></div>
        <div class="fd"><i class="cb"></i><em></em><span>currency</span></div>
        <div class="fd sub"><svg class="cv2" width="8" height="14"><use href="#right"/></svg><i class="cb"></i><svg width="12" height="12" viewBox="0 0 12 12"><rect x=".6" y=".6" width="10.800" height="10.800" rx="2" fill="none" stroke="#323130" stroke-width="1.200"/><path d="M.5 3.500h11" stroke="#323130"/><path d="M3 6.500h6M3 8.800h6" stroke="#323130" stroke-dasharray="1 1.500"/></svg><span>order_date</span></div>
        <div class="fd"><i class="cb"></i><svg width="12" height="14"><use href="#sum"/></svg><span>r_id</span></div>
        <div class="fd"><i class="cb ck"><svg width="10" height="8" viewBox="0 0 10 8"><path d="M1 4l2.800 2.700L9 1.300" fill="none" stroke="#fff" stroke-width="1.300"/></svg></i><svg width="12" height="14"><use href="#sum"/></svg><span>sales_amount</span></div>
        <div class="fd"><i class="cb"></i><svg width="12" height="14"><use href="#sum"/></svg><span>sales_qty</span></div>
        <div class="fd"><i class="cb"></i><em></em><span>user_id</span></div>
        <div class="tr"><svg class="cv" width="8" height="14"><use href="#right"/></svg><span class="tb"><svg width="13" height="13"><use href="#tbl"/></svg></span><span>restaurant</span></div>
        <div class="tr"><svg class="cv o" width="12" height="8"><use href="#open"/></svg><span class="tb"><svg width="13" height="13"><use href="#tbl"/></svg><svg class="badge" width="12" height="12"><use href="#ok"/></svg></span><span>users</span></div>
        <div class="fd"><i class="cb"></i><em></em><span>Age</span></div>
        <div class="fd"><i class="cb"></i><em></em><span>Column1</span></div>
        <div class="fd"><i class="cb"></i><em></em><span>Educational Qu...</span></div>
        <div class="fd"><i class="cb"></i><em></em><span>email</span></div>
        <div class="fd"><i class="cb"></i><em></em><span>Family size</span></div>
        <div class="fd"><i class="cb"></i><em></em><span>Gender</span></div>
        <div class="fd"><i class="cb"></i><em></em><span>Marital Status</span></div>
        <div class="fd"><i class="cb ck"><svg width="10" height="8" viewBox="0 0 10 8"><path d="M1 4l2.800 2.700L9 1.300" fill="none" stroke="#fff" stroke-width="1.300"/></svg></i><em></em><span>Monthly Income</span></div>
        <div class="fd"><i class="cb"></i><em></em><span>name</span></div>
        <div class="fd"><i class="cb"></i><em></em><span>Occupation</span></div>
        <div class="fd"><i class="cb"></i><em></em><span>password</span></div>
        <div class="fd"><i class="cb"></i><em></em><span>user_id</span></div>
      </div>
    </aside>
  </main>

  <footer class="status">
    <span>Page 2 of 5</span>
    <div class="zoom"><svg width="127" height="14" viewBox="0 0 127 14"><path d="M1 7.500h4" stroke="#605e5c" stroke-width="2"/><path d="M8 7h100M114 7h8M118 3v8" stroke="#605e5c" stroke-width="1.200"/><path d="M56.500 1.500h4v11h-4z" fill="#605e5c"/></svg><span class="pct">101%</span><svg width="16" height="12" viewBox="0 0 16 12"><path d="M.5.500h15v11H.500z" fill="none" stroke="#605e5c"/><path d="M3 5V3h2M11 3h2v2M13 7v2h-2M5 9H3V7" fill="none" stroke="#605e5c"/></svg></div>
  </footer>

  <div class="taskbar">
    <svg class="scene" width="1920" height="40" preserveAspectRatio="none">
      <defs><linearGradient id="sky" x1="0" y1="0" x2="1" y2="0"><stop offset="0" stop-color="#565d66"/><stop offset=".08" stop-color="#636a72"/><stop offset=".25" stop-color="#4f6169"/><stop offset=".45" stop-color="#5c5a5c"/><stop offset=".6" stop-color="#5c696a"/><stop offset=".72" stop-color="#5b7572"/><stop offset=".86" stop-color="#4a6569"/><stop offset=".88" stop-color="#424f56"/><stop offset="1" stop-color="#505860"/></linearGradient><filter id="soft"><feGaussianBlur stdDeviation="1.500"/></filter></defs>
      <rect width="1920" height="40" fill="url(#sky)"/>
      <g filter="url(#soft)"><path d="M180 22l160-16 6 6-120 18zM1440 40l160-40h60l-110 40z" fill="#3d464f" opacity=".7"/><path d="M270 0h8v12h-8zM296 0h9v14h-9zM318 2h8v10h-8zM724 10h14v12h-14zM740 4h16v20h-16zM806 4h40v20h-40zM1128 6h6v12h-6zM1370 1h4v11h-4zM1418 5h6v14h-6zM1488 8h8v16h-8zM1250 14h5v14h-5zM1290 5h4v9h-4z" fill="#b0a88a" opacity=".45"/><path d="M1100 2h6v36h-6zM1155 8h7v30h-7zM1172 2h5v30h-5zM1205 12h8v20h-8zM1330 22h60v3h-60zM1345 30h70v3h-70z" fill="#334649" opacity=".55"/><path d="M1227 2h6v16h-6z" fill="#a85058" opacity=".7"/><path d="M1560 22l120-12 10 4-110 14zM1560 36l120-8v5l-90 7z" fill="#66868a" opacity=".6"/></g>
    </svg>
    <span class="mark">MAXKHAREL.c</span>
    <div class="icons">
      <span class="start"><svg width="27" height="26" viewBox="0 0 27 26"><path d="M0 3.800L11.500 2.200v10.300H0zM13 2L27 0v12.500H13zM0 14h11.500v9.800L0 22.300zM13 14h14v12l-14-2z" fill="#fff"/></svg></span>
      <span><svg viewBox="0 0 32 32"><circle cx="16" cy="16" r="16" fill="#fbc116"/><path d="M16 16L2.200 8A16 16 0 0 1 29.800 8z" fill="#ea4335"/><path d="M16 0A16 16 0 0 1 29.800 8H16z" fill="#ea4335"/><path d="M2.200 8L9.500 20 16 24l-3 7.700A16 16 0 0 1 2.200 8z" fill="#31a350"/><circle cx="16" cy="16" r="7.800" fill="#fff"/><circle cx="16" cy="16" r="6.200" fill="#2a73e8"/></svg></span>
      <span class="tile"><svg viewBox="0 0 32 32"><path d="M2 4h5l1 2h21v20H2z" fill="#f0cf70"/><path d="M4 3h4v4H4zM12 5h5v3h-5zM20 6h5v3h-5z" fill="#fff"/><path d="M5 3h3v2H5z" fill="#2c2"/><path d="M12 5h3v2h-3z" fill="#e63"/><path d="M21 7h3v2h-3z" fill="#38e"/><path d="M1 9h29l-1 17H2z" fill="#fae69c" stroke="#dcb955"/><path d="M5 31V19h22v12h-6v-7H11v7z" fill="#9dd6ee" stroke="#4f9ec4"/></svg></span>
      <span><svg viewBox="0 0 32 32"><circle cx="16" cy="16" r="15.500" fill="url(#steam)"/><path d="M0 17l9 4 6-6" stroke="#fff" stroke-width="4" fill="none"/><circle cx="9" cy="21" r="4.500" fill="#fff"/><circle cx="9" cy="21" r="2.500" fill="#12386e"/><circle cx="20.500" cy="11.500" r="6.500" fill="#fff"/><circle cx="20.500" cy="11.500" r="4.300" fill="#12253e"/><circle cx="20.500" cy="11.500" r="3" fill="#fff"/></svg></span>
      <span><svg viewBox="0 0 32 32"><circle cx="16" cy="16" r="16" fill="#0d72e4"/><g fill="none" stroke="#fff" stroke-width="1.700"><path d="M12 17C7 6 13 2 17 9l7 14M7 11c-3 5 5 9 12 9 7 0 9-4 3-7M10 24c-4 1-2-3 1-7 4-6 9-9 13-8M10 24c4 1 9-4 13-10"/></g></svg></span>
      <span><svg viewBox="0 0 32 32"><circle cx="16" cy="16" r="13.500" fill="#f7edfa" stroke="#7d2ea0" stroke-width="1.500"/><text x="16" y="15" class="gog">gog</text><text x="16" y="23.500" class="gog">com</text></svg></span>
      <span><svg viewBox="0 0 32 32"><path d="M18 0c-2 3-1 4-1 5 6 0 11 5 11 11 0 8-6 12-13 16 2-3 1-4 1-5C10 27 5 22 5 16 4 8 11 3 18 0zm-2 12a4 4 0 1 0 0 8 4 4 0 0 0 0-8z" fill="#ee6030"/></svg></span>
      <span><svg viewBox="0 0 32 32"><circle cx="16" cy="16" r="16" fill="#006ef5"/><g fill="none" stroke="#fff" stroke-width="2.200"><path d="M6 12C10 4 22 4 25 12s-1 14-9 14S5 21 7 16c3-6 11-7 13-2s-1 8-5 7-4-5-1-5"/></g></svg></span>
      <span><svg viewBox="0 0 32 32"><path d="M8 2h24v28H8z" fill="#21a366"/><path d="M20 2h12v7H20z" fill="#33c481"/><path d="M8 16h12v14H8z" fill="#185c37"/><path d="M20 16h12v7H20z" fill="#107c41"/><path d="M20 23h12v7H20z" fill="#185c37"/><path d="M0 8h16v16H0z" fill="#107c41"/><text x="8" y="21" class="ms">X</text></svg></span>
      <span><svg viewBox="0 0 32 32"><path d="M8 2h24v28H8z" fill="#ca64ea"/><path d="M25 9h7v7h-7z" fill="#ae4bd5"/><path d="M25 16h7v7h-7z" fill="#9332bf"/><path d="M25 23h7v7h-7z" fill="#7719aa"/><path d="M0 8h16v16H0z" fill="#7719aa"/><text x="8" y="21" class="ms">N</text></svg></span>
      <span><svg viewBox="0 0 32 32"><path d="M8 2h22v14H8z" fill="#28a8ea"/><path d="M19 2h11v7H19z" fill="#50d9ff"/><path d="M8 9h11v7H8z" fill="#0364b8"/><path d="M6 14h26v16H6z" fill="#1490df"/><path d="M6 30l26-15v15z" fill="#28a8ea"/><path d="M0 8h16v16H0z" fill="#0f6cbd"/><text x="8" y="21" class="ms">O</text></svg></span>
      <span><svg viewBox="0 0 32 32"><circle cx="18" cy="16" r="14" fill="#ed6c47"/><path d="M18 2a14 14 0 0 1 14 14H18z" fill="#ff8f6b"/><path d="M4 16h28a14 14 0 0 1-28 0z" fill="#d35230"/><path d="M0 8h16v16H0z" fill="#c43e1c"/><text x="8" y="21" class="ms">P</text></svg></span>
      <span><svg viewBox="0 0 32 32"><path d="M8 2h24v7H8z" fill="#41a5ee"/><path d="M8 9h24v7H8z" fill="#2b7cd3"/><path d="M8 16h24v7H8z" fill="#185abd"/><path d="M8 23h24v7H8z" fill="#103f91"/><path d="M0 8h16v16H0z" fill="#185abd"/><text x="8" y="21" class="ms">W</text></svg></span>
      <span><svg viewBox="0 0 32 32"><path d="M20 1c1 4 4 5 6 8 1-1 1-2 1-2 10 14-1 25-11 25C5 32-2 23 2 10c1 1 1 1 2 0 0-2 1-3 2-4 1 2 3 3 5 3 4 0 6-3 9-8z" fill="url(#fox)"/><circle cx="16" cy="18" r="7" fill="#7a3fdc"/><path d="M6 12c5-3 7 1 12 0-1 3-5 3-7 4 0 5 4 8 9 6-5 6-15 4-15-5z" fill="#ff9640"/></svg></span>
      <span class="tile hot"><svg viewBox="0 0 32 32"><circle cx="16" cy="16" r="16" fill="#5865f2"/><path d="M8 10c4-3 12-3 16 0 3 4 3 8 3 11-2 2-5 2-5 2l-2-2h-8l-2 2s-3 0-5-2c0-4 0-7 3-11z" fill="#fff"/><circle cx="12.500" cy="16.500" r="2.200" fill="#5865f2"/><circle cx="19.500" cy="16.500" r="2.200" fill="#5865f2"/><circle cx="24" cy="24" r="7.500" fill="#f04747"/><text x="24" y="28" class="nine">9+</text></svg></span>
      <span class="tile on"><svg viewBox="0 0 32 32"><path d="M16 0h9c1 0 2 1 2 2v28c0 1-1 2-2 2h-9z" fill="#d9a10f"/><path d="M9 10c0-1 1-2 2-2h8c1 0 2 1 2 2v22H9z" fill="#efc02e"/><path d="M2 18c0-1 1-2 2-2h8c1 0 2 1 2 2v14H4c-1 0-2-1-2-2z" fill="url(#pbi)"/></svg></span>
      <span class="tile dim"><svg viewBox="0 0 32 32"><path d="M11 2l19 2-1 24-5 3z" fill="#c39b52"/><path d="M11 2l17 2-5 27-21-6z" fill="url(#note)"/><path d="M11 2l17 2-.5 3L10 5z" fill="#eef"/></svg></span>
      <span class="tile dim"><svg viewBox="0 0 32 32"><rect x="2" y="2" width="28" height="28" rx="5" fill="#b30b00"/><path d="M8 22c3-1 7-6 8-12 1-4-2-4-2-1 1 6 5 10 9 10s3-3-1-2c-5 0-10 2-13 4-2 2-2 3-1 1z" fill="none" stroke="#fff" stroke-width="1.700"/></svg></span>
    </div>
    <div class="tray">
      <svg width="88" height="20" viewBox="-4 0 88 20"><path d="M-3 12h9L1.500 7z" fill="#fff"/><path d="M25.500 3.500h7v14h-7zM27.500 1.500h3v2h-3z" fill="#5a626a" stroke="#fff" stroke-width="1.400"/><path d="M27.500 6h3v9h-3z" fill="#fff"/><path d="M19 8h5v4h-5zM20 3v5M23 3v5M21.500 12v6" stroke="#fff" fill="#fff"/><path d="M42 8h3l4-5v14l-4-5h-3z" fill="#fff"/><path d="M51.500 7c1.500 2 1.500 4 0 6M54 5c2.500 3.500 2.500 7 0 10" stroke="#fff" fill="none" stroke-width="1.200"/><path d="M66 13h2.500v3H66zM69.500 11H72v5h-2.500zM73 9h2.500v7H73zM76.500 7H79v9h-2.500zM80 4.500h2.500V16H80z" fill="#fff"/></svg>
      <div class="clock">8:38 PM<br>1/2/2025</div>
    </div>
  </div>
</div>
</body>
</html>
```
FILE: styles.css
```css
* { box-sizing: border-box; }
body { margin: 0; background: #fff; color: #252423; font: 12px/16px "Open Sans", "Noto Sans", sans-serif; letter-spacing: -0.35px; overflow: hidden; }
svg { display: block; flex: none; }
.defs { position: absolute; }
h2 { margin: 0; font-size: 16px; font-weight: 600; letter-spacing: -0.6px; line-height: 20px; }
.app { width: 1920px; height: 1080px; display: flex; flex-direction: column; }

/* Title bar */
.titlebar { height: 34px; background: #3b3a39; color: #fff; display: flex; align-items: center; flex: none; }
.quick { display: flex; gap: 15px; padding-left: 17px; width: 102px; }
.doc { width: 274px; white-space: nowrap; padding-top: 6px; letter-spacing: -0.26px; }
.caret { margin-left: 6px; border: 4px solid transparent; border-top: 5px solid #fff; border-bottom: 0; }
.topsearch { margin-left: 473px; width: 400px; height: 24px; background: #d2d0ce; border-radius: 2px; display: flex; align-items: center; gap: 11px; padding-left: 17px; font-size: 14px; letter-spacing: -0.5px; color: #2b4a46; }
.account { margin-left: 444px; display: flex; align-items: center; white-space: nowrap; letter-spacing: -0.2px; }
.account span { width: 46px; padding-top: 1px; }
.win { margin-left: 34px; }
.account svg:nth-of-type(2) { margin-left: 32px; }

/* Ribbon tabs */
.tabs { height: 33px; background: #fafafa; display: flex; flex: none; font-size: 14px; line-height: 33px; letter-spacing: -0.42px; white-space: nowrap; }
.tab { height: 31px; margin-right: 31px; flex: none; }
.t-file { width: 20px; margin-left: 23px; margin-right: 38px; }
.t-home { width: 38px; letter-spacing: -0.6px; }
.t-insert { width: 35px; margin-right: 32px; }
.t-model { width: 59px; }
.t-view { width: 31px; margin-right: 30px; }
.t-opt { width: 56px; margin-right: 32px; }
.t-help { width: 29px; margin-right: 15px; }
.tab.active { font-weight: 600; border-bottom: 3px solid #117865; }
.ctx { background: #fff; color: #117865; font-weight: 600; text-align: center; height: 30px; flex: none; letter-spacing: -0.5px; }
.c-format { width: 75px; margin-right: 4px; }
.c-drill { width: 100px; }
.share { margin: 4px 6px 0 auto; width: 84px; height: 24px; border-radius: 4px; background: #117865; color: #fff; font-size: 12px; display: flex; align-items: center; gap: 6px; padding-left: 7px; }
.share span { width: 31px; }

/* Ribbon */
.ribbon { height: 93px; background: #fafafa; display: flex; flex: none; padding-top: 3px; box-shadow: 0 2px 5px rgba(0,0,0,.2); position: relative; z-index: 2; }
.group { height: 88px; border-right: 1px solid #d2d0ce; display: flex; flex-direction: column; flex: none; }
.tools { display: flex; height: 78px; padding-top: 5px; flex: none; }
.gname { text-align: center; font-size: 10px; line-height: 14px; color: #3b3a39; letter-spacing: -0.1px; }
.g-clip { width: 161px; } .g-data { width: 369px; } .g-query { width: 117px; } .g-ins { width: 148px; }
.g-calc { width: 187px; } .g-sens { width: 74px; } .g-share { width: 59px; } .g-cop { width: 60px; }
.g-share .tools, .g-cop .tools { justify-content: center; }
.btn { display: flex; flex-direction: column; align-items: center; flex: none; }
.nudge svg { margin-left: 4px; }
.back svg { margin-right: 4px; }
.btn b { font-weight: 400; text-align: center; white-space: nowrap; padding-top: 3px; }
.btn b i { display: inline-block; width: 5px; height: 5px; border: solid #3b3a39; border-width: 0 1.300px 1.300px 0; transform: rotate(45deg) scale(.8); margin: 0 1px 3px 0; }
.off { color: #bdbbb9; }
.btn.off b i { border-color: #bdbbb9; }
.shift { margin-left: 4px; } .qfirst { margin-left: 7px; } .ifirst { margin-left: 8px; } .g-calc .w76 { margin-left: 4px; }
.w32 { width: 32px; } .w40 { width: 40px; } .w42 { width: 42px; } .w48 { width: 48px; } .w50 { width: 50px; } .w56 { width: 52px; margin-left: 2px; } .w58 { width: 58px; } .w63 { width: 63px; } .w72 { width: 72px; } .w73 { width: 73px; } .w76 { width: 76px; }
.clip { display: flex; flex-direction: column; margin-top: -4px; margin-left: -2px; }
.clip span { height: 24px; display: flex; align-items: center; white-space: nowrap; gap: 4px; letter-spacing: -0.42px; }
.clip span svg { width: 16px; }
.collapse { margin: 78px 5px 0 auto; }
.xl { font: 700 11px "Open Sans", sans-serif; fill: #fff; text-anchor: middle; }
.fx { font: italic 20px "Liberation Serif", serif; fill: #3b3a39; }

/* Body columns */
.body { height: 856px; display: flex; flex: none; border-bottom: 1px solid #d8d6d4; }
.rail { width: 41px; background: #f3f2f1; border-right: 1px solid #e1dfdd; flex: none; }
.rail span { height: 40px; display: flex; align-items: center; justify-content: center; border-left: 3px solid transparent; padding-right: 3px; }
.rail .on { border-color: #117865; }
.dax { font: 700 7px "Open Sans", sans-serif; fill: #767472; }
.stage { width: 1316px; display: flex; flex-direction: column; flex: none; }
.canvas { height: 820px; position: relative; }
.grid { display: block; }
.chart { position: absolute; left: 399px; top: 196px; }
.chart text { letter-spacing: 0; }
.ctitle { font: 16px Roboto, sans-serif; fill: #252423; }
.atitle { font: 14px Roboto, sans-serif; fill: #252423; }
.ax { font: 11.500px "Open Sans", sans-serif; fill: #605e5c; }
.tip { font: 12.500px "Open Sans", sans-serif; fill: #252423; }
.hdr { fill: none; stroke: #605e5c; }

/* Page tabs */
.pages { height: 35px; display: flex; background: #f3f2f1; width: 1517px; letter-spacing: -0.24px; }
.views { width: 128px; display: flex; flex: none; border-right: 1px solid #a19f9d; }
.desk { width: 24px; margin: 7px 0 0 10px; padding-left: 2px; height: 24px; border-bottom: 3px solid #117865; }
.phone { margin: 5px 0 0 26px; }
.nav { margin: 14px 0 0 21px; }
.pg { background: #fff; border-right: 1px solid #c8c6c4; text-align: center; line-height: 38px; white-space: nowrap; flex: none; }
.p1 { width: 196px; } .p2 { width: 268px; } .p3 { width: 246px; } .p4 { width: 214px; } .p5 { width: 104px; }
.sel { font-weight: 600; border-bottom: 4px solid #117865; letter-spacing: -0.31px; }
.plus { width: 39px; background: #117865; display: flex; align-items: center; justify-content: center; }

/* Filters pane */
.filters { width: 201px; height: 820px; background: #fff; border-left: 1px solid #a19f9d; flex: none; }
.fhead { height: 44px; display: flex; align-items: center; padding: 0 9px 6px 12px; }
.fhead h2 { margin-left: 7px; flex: 1; }
.eye { margin-right: 18px; }
.fsearch { margin: 0 0 4px 8px; width: 181px; height: 32px; border: 1px solid #a19f9d; border-radius: 2px; display: flex; align-items: center; gap: 13px; padding-left: 10px; }
.flist { border-top: 1px solid #a19f9d; padding: 17px 8px 0; }
.flabel { height: 24px; line-height: 17px; display: flex; justify-content: space-between; padding-right: 5px; }
.el { display: flex; gap: 3px; padding-top: 10px; }
.el i { width: 2px; height: 1px; background: #605e5c; }
.card { height: 46px; width: 184px; border: 1px solid #c8c6c4; border-radius: 2px; padding: 4px 9px; line-height: 18px; margin-bottom: 6px; }
.add { display: flex; align-items: center; justify-content: center; }
.flabel.more { margin-top: 27px; height: 24px; line-height: 16px; }

/* Visualizations pane */
.viz, .data { background: #f3f2f1; border-left: 1px solid #d8d6d4; height: 855px; flex: none; }
.viz { width: 181px; }
.phead { display: flex; justify-content: space-between; align-items: center; padding: 0 8px 0 8px; height: 38px; }
.build { padding-left: 8px; line-height: 16px; font-size: 12px; }
.modes { display: flex; justify-content: space-between; padding: 3px 10px 0 8px; height: 36px; }
.mode { width: 32px; height: 32px; display: flex; align-items: center; justify-content: center; }
.mode:nth-child(3) { width: 27px; }
.cur { background: #d2d0ce; border-radius: 2px; }
.notch { margin-top: 3px; }
.gallery { display: grid; grid-template-columns: repeat(6, 28px); grid-auto-rows: 28px; padding: 5px 0 0 6px; height: 203px; }
.gallery > svg { width: 18px; height: 18px; margin: 5px; overflow: visible; }
.gallery > .pick { outline: 1px solid #252423; outline-offset: 3px; }
.gallery use[href="#axes"] { width: 18px; height: 18px; }
.n123 { font: 8.500px "Open Sans", sans-serif; fill: #2b88d8; text-anchor: middle; letter-spacing: 0; }
.lang { font: 700 15px "Open Sans", sans-serif; fill: #2188ca; text-anchor: middle; }
.dots3 { display: flex; gap: 5px; padding: 11px 0 0 12px; height: 31px; border-bottom: 1px solid #d8d6d4; }
.dots3 i { width: 2px; height: 2px; background: #3b5a75; }
.wells { padding: 8px 5px 0 4px; display: flex; flex-direction: column; }
.wells label { height: 22px; line-height: 17px; padding-left: 8px; }
.well { height: 28px; border: 1px dashed #c0bebc; background: #fff; border-radius: 2px; padding-left: 9px; line-height: 27px; margin-bottom: 9px; width: 171px; white-space: nowrap; }
.well + label { margin-top: 1px; height: 22px; }
.well.tall { height: 38px; padding: 3px 2px; margin-bottom: 8px; }
.pill { height: 24px; background: #eceae8; border: 1px solid #c0bebc; border-radius: 2px; display: flex; align-items: center; padding: 0 4px; line-height: 22px; gap: 5px; }
.pill span { flex: 1; white-space: nowrap; }
.drill { padding: 1px 0 0 8px; font-weight: 600; color: #484644; line-height: 18px; height: 27px; }
.sw { height: 27px; display: flex; justify-content: space-between; align-items: flex-start; padding: 0 17px 0 8px; }
.toggle { width: 32px; height: 16px; border: 1px solid #605e5c; border-radius: 8px; background: #fff; font-size: 10px; line-height: 14px; display: flex; align-items: center; gap: 2px; padding-left: 4px; color: #605e5c; }
.toggle i { width: 8px; height: 8px; border-radius: 50%; background: #605e5c; }
.toggle.yes { background: #117865; border-color: #117865; color: #fff; }
.toggle.yes i { background: #fff; }
.well.last { height: 26px; line-height: 25px; padding-left: 8px; margin-top: -1px; letter-spacing: -0.27px; }

/* Data pane */
.data { width: 181px; }
.data .phead { padding-right: 8px; padding-left: 8px; }
.dsearch { margin: 6px 0 0 4px; width: 172px; height: 25px; background: #fff; border: 1px solid #c8c6c4; border-bottom-color: #605e5c; border-radius: 4px; display: flex; align-items: center; gap: 6px; padding-left: 11px; font-size: 13px; color: #605e5c; }
.tree { padding-top: 10px; }
.tr, .fd { height: 24px; display: flex; align-items: center; white-space: nowrap; color: #323130; }
.tr { padding-left: 15px; }
.cv { margin-right: 6px; }
.cv.o { margin-left: -2px; margin-right: 4px; }
.tb { width: 18px; position: relative; }
.badge { position: absolute; left: 6px; top: 6px; }
.fd { padding-left: 44px; }
.fd.sub { padding-left: 30px; }
.cv2 { margin-right: 6px; }
.cb { width: 12px; height: 12px; border: 1px solid #797775; border-radius: 2px; margin-right: 8px; flex: none; display: flex; align-items: center; justify-content: center; }
.ck { background: #117865; border-color: #117865; }
.fd em { width: 12px; flex: none; }
.fd > span { margin-left: 6px; }

/* Status bar */
.status { height: 23px; background: #f3f2f1; display: flex; justify-content: space-between; align-items: center; padding: 2px 18px 0 4px; color: #484644; flex: none; letter-spacing: -0.25px; }
.zoom { display: flex; align-items: center; }
.pct { width: 50px; padding-left: 9px; }

/* Taskbar */
.taskbar { height: 41px; border-top: 1px solid #000; position: relative; display: flex; justify-content: space-between; flex: none; background: #565d66; }
.scene { position: absolute; left: 0; top: 0; }
.mark { position: absolute; left: 44px; top: 16px; font: 20px/20px "Liberation Serif", serif; letter-spacing: 0; color: rgba(255,255,255,.45); transform: scaleX(-1); }
.icons, .tray { position: relative; display: flex; }
.icons span { width: 58px; height: 38px; margin: 1px 2px; display: flex; align-items: center; justify-content: center; }
.icons span svg { width: 32px; height: 32px; }
.icons .start { width: 50px; margin: 1px 0 0; }
.icons .start svg { width: 27px; height: 26px; }
.icons .tile { border: 1px solid rgba(255,255,255,.5); background: rgba(255,255,255,.2); }
.icons .dim { border-color: rgba(255,255,255,.4); background: rgba(255,255,255,.1); }
.icons .hot { background: linear-gradient(#e0cb54, #dd9044); border-color: #f5e5a0; }
.icons .on { background: rgba(255,255,255,.38); border-color: #fff; width: 52px; margin-right: 8px; box-shadow: 3px 0 0 -1px #777, 4px 0 0 -1px #fff, 6px 0 0 -1px #777, 7px 0 0 -1px #ddd; }
.tray { align-items: center; padding-right: 12px; }
.clock { width: 60px; margin-left: 12px; padding-top: 2px; text-align: center; color: #fff; line-height: 17px; }
.gog { font: 700 10px "DejaVu Sans", sans-serif; fill: #7d2ea0; text-anchor: middle; letter-spacing: 0; }
.ms { font: 700 13px "Open Sans", sans-serif; fill: #fff; text-anchor: middle; letter-spacing: 0; }
.nine { font: 700 10px "Open Sans", sans-serif; fill: #fff; text-anchor: middle; letter-spacing: 0; }
```
